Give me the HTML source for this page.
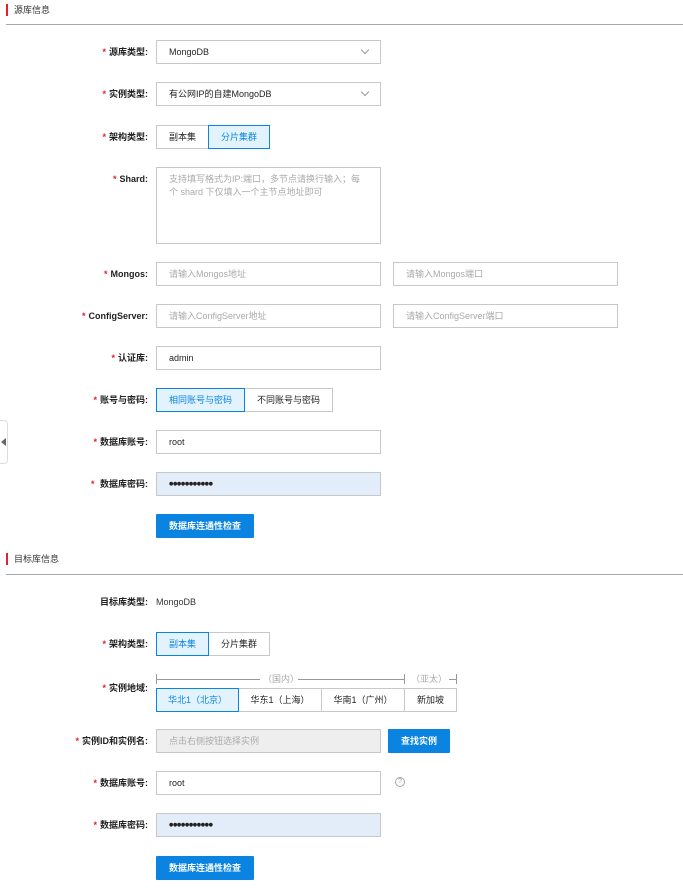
<!DOCTYPE html>
<html><head><meta charset="utf-8"><style>
*{box-sizing:border-box;margin:0;padding:0}
body{width:683px;height:888px;background:#fff;position:relative;overflow:hidden;font-family:"Liberation Sans","Noto Sans CJK SC",sans-serif;font-size:9px;color:#333}
.a{position:absolute}
.hd{position:absolute;left:6px;height:12px;border-left:2px solid #e5202e;padding-left:6px;line-height:12px;font-size:9px;color:#333}
.ln{position:absolute;left:6px;right:0;height:1px;background:#a8a8a8}
.lb{position:absolute;right:535px;width:150px;text-align:right;font-weight:bold;line-height:24px;height:24px;color:#222}
.lb i{font-style:normal;color:#e5202e;margin-right:3px;font-weight:bold}
.in{position:absolute;height:24px;border:1px solid #c8c8c8;padding-left:12px;line-height:22px;background:#fff;color:#222}
.ph{color:#aaa}
.sel::after{content:"";position:absolute;right:12px;top:6px;width:5px;height:5px;border-right:1px solid #999;border-bottom:1px solid #999;transform:rotate(45deg)}
.bt{position:absolute;height:24px;border:1px solid #c8c8c8;text-align:center;line-height:22px;background:#fff;color:#222}
.on{border-color:#0a84e0;background:#e3f3fd;color:#0a84e0;z-index:2}
.pr{position:absolute;height:24px;background:#0a84e0;color:#fff;text-align:center;line-height:24px;border-radius:1px;font-weight:bold}
.pw{background:#e3edf9;font-family:"DejaVu Sans",sans-serif;font-size:5px;letter-spacing:-0.4px;color:#222}
</style></head><body>
<div class="hd" style="top:4px">源库信息</div>
<div class="ln" style="top:24px"></div>

<div class="lb" style="top:40px"><i>*</i>源库类型:</div>
<div class="in sel" style="top:40px;left:156px;width:225px">MongoDB</div>

<div class="lb" style="top:82px"><i>*</i>实例类型:</div>
<div class="in sel" style="top:82px;left:156px;width:225px">有公网IP的自建MongoDB</div>

<div class="lb" style="top:125px"><i>*</i>架构类型:</div>
<div class="bt" style="top:125px;left:156px;width:53px">副本集</div>
<div class="bt on" style="top:125px;left:208px;width:62px">分片集群</div>

<div class="lb" style="top:167px"><i>*</i>Shard:</div>
<div class="in ph" style="top:167px;left:156px;width:225px;height:77px;line-height:13px;padding-top:5px;padding-right:20px">支持填写格式为IP:端口，多节点请换行输入；每个 shard 下仅填入一个主节点地址即可</div>

<div class="lb" style="top:262px"><i>*</i>Mongos:</div>
<div class="in ph" style="top:262px;left:156px;width:225px">请输入Mongos地址</div>
<div class="in ph" style="top:262px;left:393px;width:225px">请输入Mongos端口</div>

<div class="lb" style="top:304px"><i>*</i>ConfigServer:</div>
<div class="in ph" style="top:304px;left:156px;width:225px">请输入ConfigServer地址</div>
<div class="in ph" style="top:304px;left:393px;width:225px">请输入ConfigServer端口</div>

<div class="lb" style="top:346px"><i>*</i>认证库:</div>
<div class="in" style="top:346px;left:156px;width:225px">admin</div>

<div class="lb" style="top:388px"><i>*</i>账号与密码:</div>
<div class="bt on" style="top:388px;left:156px;width:89px">相同账号与密码</div>
<div class="bt" style="top:388px;left:244px;width:89px">不同账号与密码</div>

<div class="a" style="left:-4px;top:420px;width:12px;height:44px;border:1px solid #ddd;border-radius:4px;background:#fff"></div>
<div class="a" style="left:1px;top:438px;width:0;height:0;border-top:4px solid transparent;border-bottom:4px solid transparent;border-right:5px solid #666"></div>

<div class="lb" style="top:430px"><i>*</i>数据库账号:</div>
<div class="in" style="top:430px;left:156px;width:225px">root</div>

<div class="lb" style="top:472px"><i>*</i> 数据库密码:</div>
<div class="in pw" style="top:472px;left:156px;width:225px">●●●●●●●●●●●</div>

<div class="pr" style="top:514px;left:156px;width:98px">数据库连通性检查</div>

<div class="hd" style="top:553px">目标库信息</div>
<div class="ln" style="top:574px"></div>

<div class="lb" style="top:590px">目标库类型:</div>
<div class="a" style="top:590px;left:156px;line-height:24px">MongoDB</div>

<div class="lb" style="top:632px"><i>*</i>架构类型:</div>
<div class="bt on" style="top:632px;left:156px;width:53px">副本集</div>
<div class="bt" style="top:632px;left:208px;width:62px">分片集群</div>

<div class="lb" style="top:676px"><i>*</i>实例地域:</div>
<div class="a" style="top:674px;left:156px;width:1px;height:10px;background:#999"></div>
<div class="a" style="top:679px;left:156px;width:104px;height:1px;background:#999"></div>
<div class="a ph" style="top:673px;left:263px;line-height:12px">（国内）</div>
<div class="a" style="top:679px;left:298px;width:106px;height:1px;background:#999"></div>
<div class="a" style="top:674px;left:404px;width:1px;height:10px;background:#999"></div>
<div class="a ph" style="top:673px;left:411px;line-height:12px">（亚太）</div>
<div class="a" style="top:679px;left:449px;width:8px;height:1px;background:#999"></div>
<div class="a" style="top:674px;left:456px;width:1px;height:10px;background:#999"></div>
<div class="bt on" style="top:688px;left:156px;width:83px">华北1（北京）</div>
<div class="bt" style="top:688px;left:238px;width:84px">华东1（上海）</div>
<div class="bt" style="top:688px;left:321px;width:84px">华南1（广州）</div>
<div class="bt" style="top:688px;left:404px;width:53px">新加坡</div>

<div class="lb" style="top:729px"><i>*</i>实例ID和实例名:</div>
<div class="in ph" style="top:729px;left:156px;width:225px;background:#eee">点击右侧按钮选择实例</div>
<div class="pr" style="top:729px;left:388px;width:62px">查找实例</div>

<div class="lb" style="top:771px"><i>*</i>数据库账号:</div>
<div class="in" style="top:771px;left:156px;width:225px">root</div>
<div class="a" style="top:777px;left:395px;width:10px;height:10px;border:1px solid #aaa;border-radius:50%;font-size:7px;line-height:8px;text-align:center;color:#999">?</div>

<div class="lb" style="top:813px"><i>*</i>数据库密码:</div>
<div class="in pw" style="top:813px;left:156px;width:225px">●●●●●●●●●●●</div>

<div class="pr" style="top:856px;left:156px;width:98px">数据库连通性检查</div>
</body></html>
